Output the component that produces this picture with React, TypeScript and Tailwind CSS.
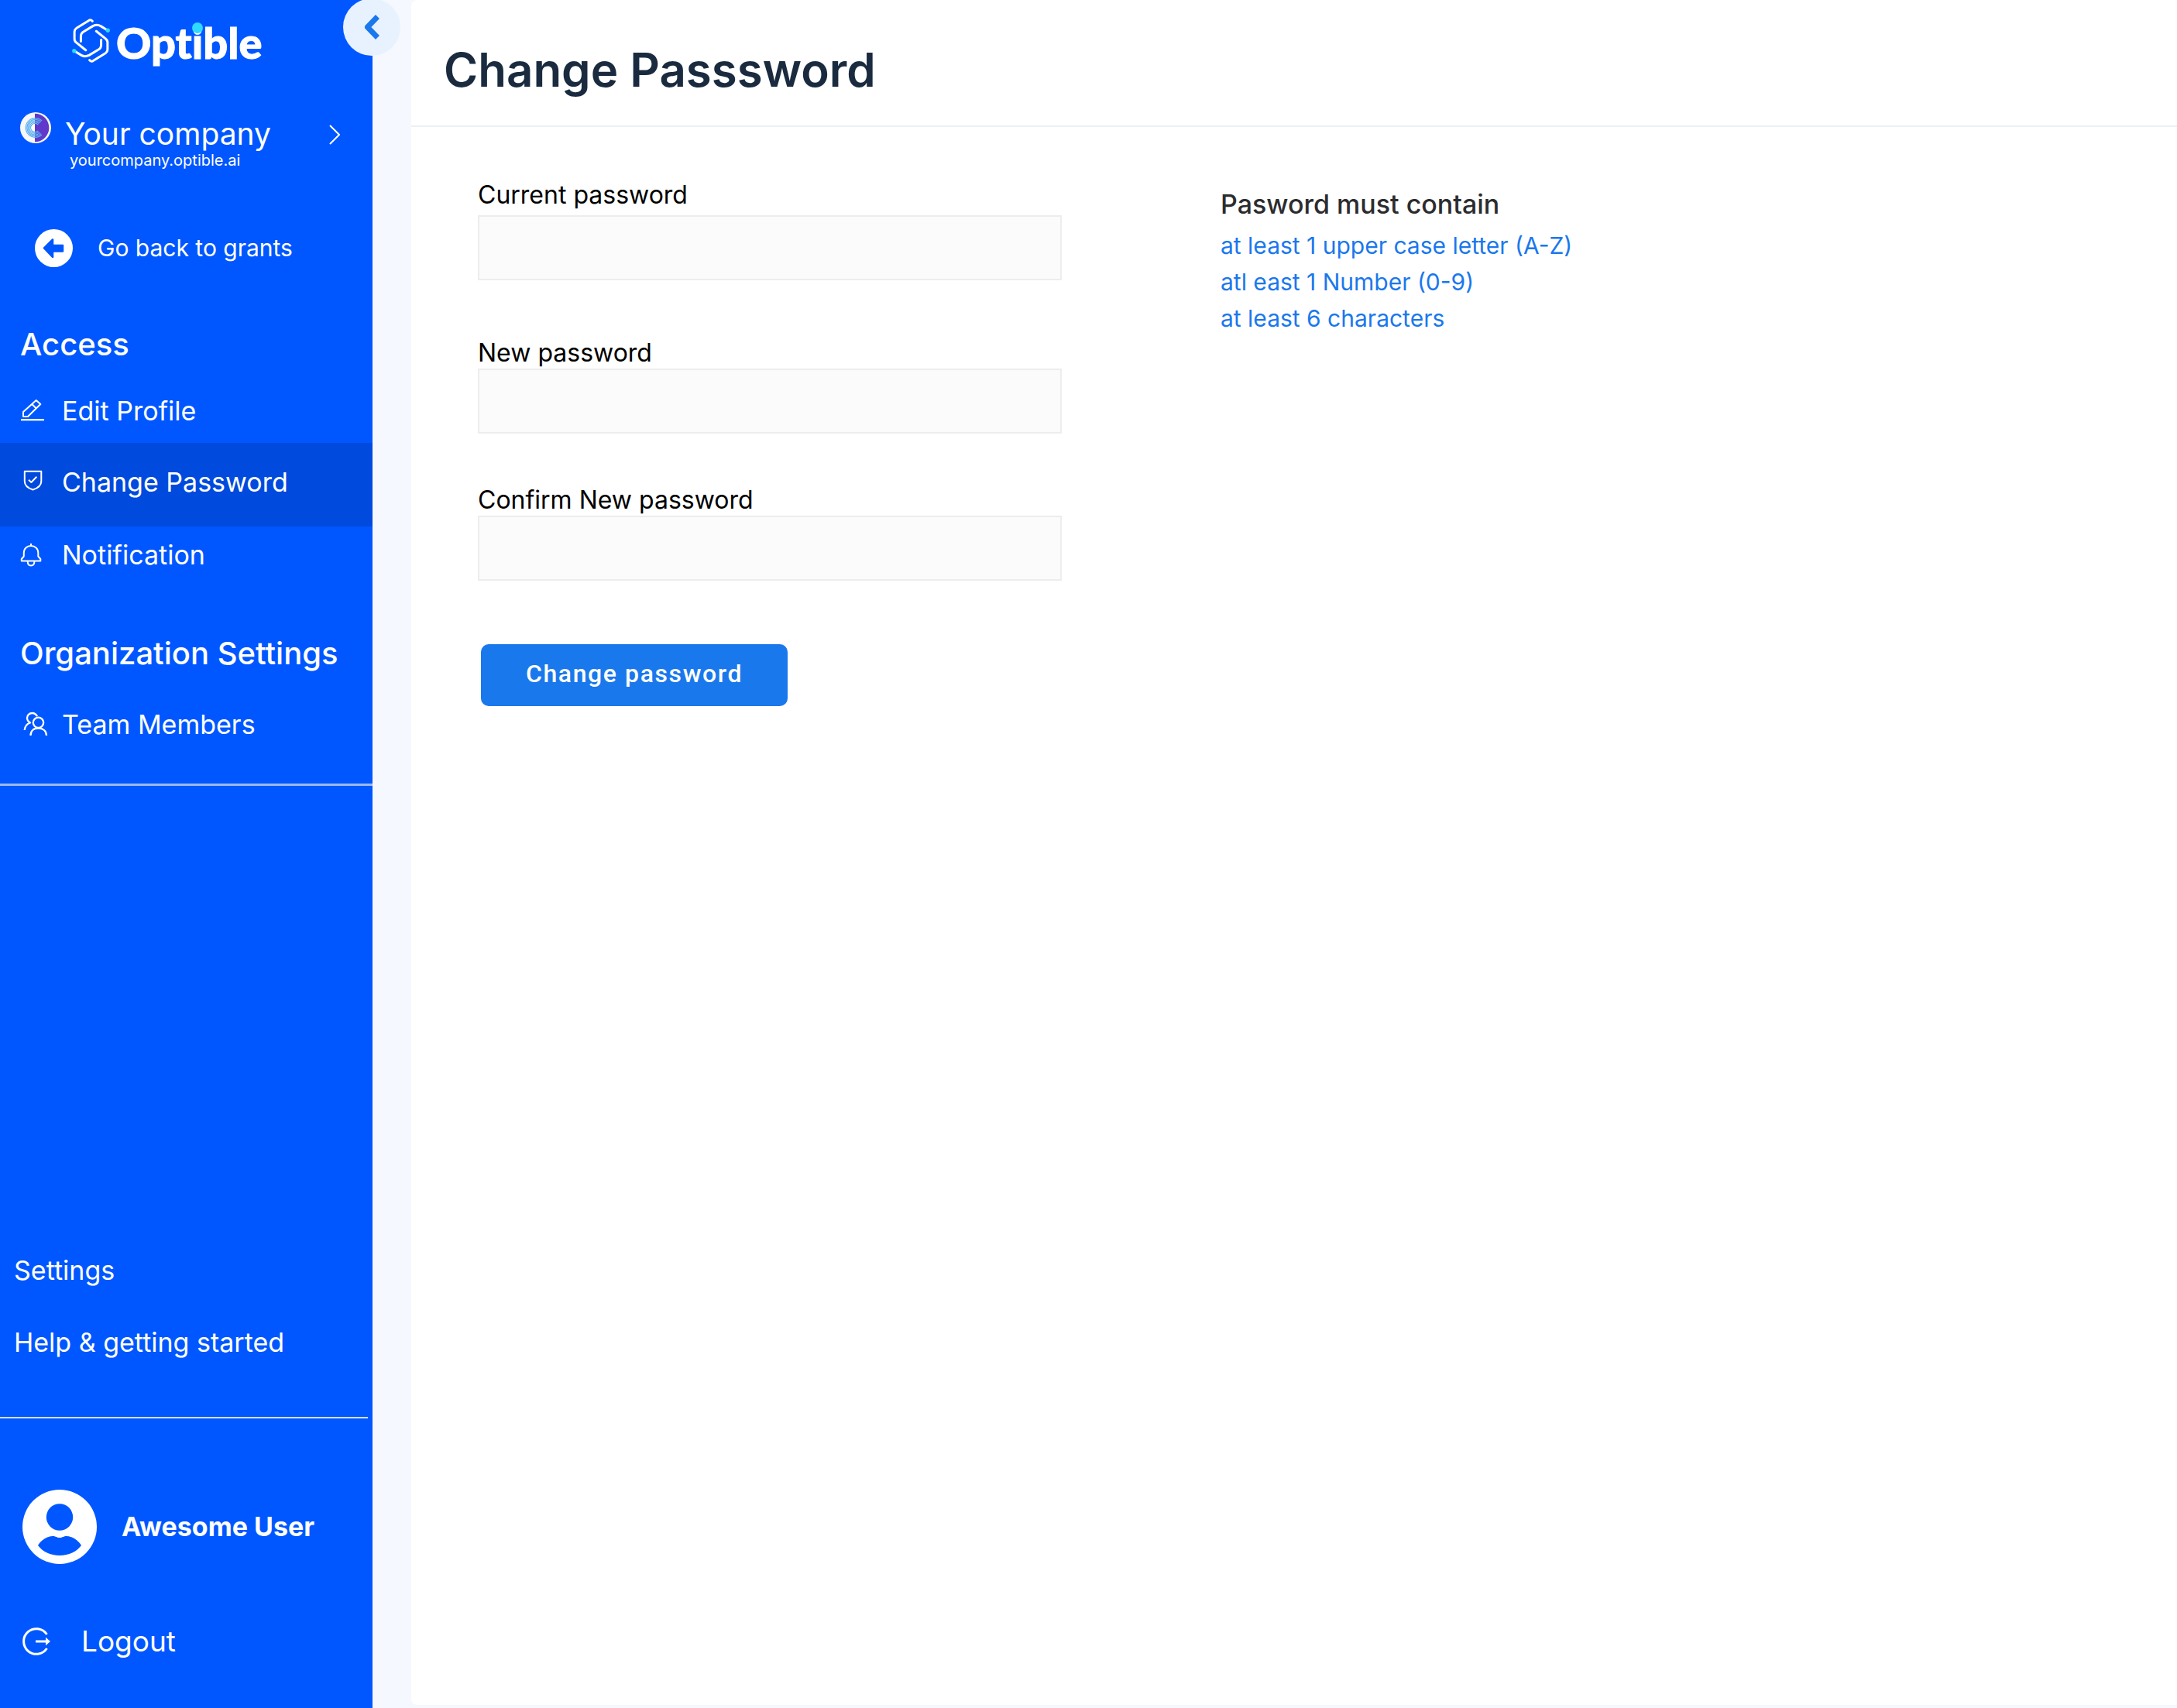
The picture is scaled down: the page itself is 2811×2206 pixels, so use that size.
import type { ReactNode } from "react";

function OptibleMark() {
  return (
    <svg viewBox="27 29 147 172" className="h-[57px] w-[49px]" fill="none" stroke="#fff" strokeWidth="9" strokeLinecap="round" strokeLinejoin="round" aria-hidden="true">
      <g>
        <path d="M106 39Q99 31 91 37L43 67Q36 72 36 80V108Q36 117 43 122L80 152" />
        <path d="M61 118V98Q61 87 70 81L108 58Q124 50 138 58L162 73" />
      </g>
      <g transform="rotate(180 100.5 115)">
        <path d="M106 39Q99 31 91 37L43 67Q36 72 36 80V108Q36 117 43 122L80 152" />
        <path d="M61 118V98Q61 87 70 81L108 58Q124 50 138 58L162 73" />
      </g>
      <circle cx="166" cy="75" r="8" fill="#2fd9ff" stroke="none" />
      <circle cx="35" cy="155" r="8" fill="#2fd9ff" stroke="none" />
    </svg>
  );
}

function CompanyAvatar() {
  return (
    <svg viewBox="0 0 120 120" className="size-10 shrink-0" fill="none" aria-hidden="true">
      <circle cx="60" cy="60" r="60" fill="#f7f7f8" />
      <path d="M57 5A55 55 0 0 1 57 115Z" fill="#6039cb" />
      <g stroke="#57aef0" strokeWidth="3.5">
        <path d="M70 48A17 17 0 1 0 70 72" />
        <path d="M73 44A22 22 0 1 0 73 76" />
        <path d="M77 41A27 27 0 1 0 77 79" />
        <path d="M81 37A32 32 0 1 0 81 83" />
        <path d="M84 33A37 37 0 1 0 84 87" />
      </g>
      <path d="M57 46A14 14 0 0 0 57 74Z" fill="#fff" />
    </svg>
  );
}

function BackIcon() {
  return (
    <svg viewBox="0 0 49 49" className="size-[49px] shrink-0" aria-hidden="true">
      <circle cx="24.5" cy="24.5" r="24.5" fill="#fff" />
      <path d="M12 24.5L23 13.500V21H36V28.500H23V36Z" fill="#0057ff" stroke="#0057ff" strokeWidth="2.500" strokeLinejoin="round" />
    </svg>
  );
}

function NavIcon({ children }: { children: ReactNode }) {
  return (
    <svg viewBox="0 0 36 36" className="size-9 shrink-0 overflow-visible" fill="none" stroke="#fff" strokeWidth="2" strokeLinejoin="round" aria-hidden="true">
      {children}
    </svg>
  );
}

const pencil = (
  <NavIcon>
    <path d="M22.700 4L28.300 9L12 25H6V19Z M17.300 9L22.600 14.300" />
    <path d="M3 29.200H33" strokeWidth="2.300" />
  </NavIcon>
);

const shield = (
  <NavIcon>
    <path d="M7.800 3.700H29.300V16.500C29.300 22 25 25.500 18.500 27.500C12 25.500 7.800 22 7.800 16.500Z" />
    <path d="M13 14.700L16.400 18L23.300 10.700" />
  </NavIcon>
);

const bell = (
  <NavIcon>
    <path d="M16 3V6" />
    <path d="M6.800 15C6.800 9.500 10.700 6 16 6S25.300 9.500 25.300 15V19.500L28.300 23V25.500H3.800V23L6.800 19.500Z" />
    <path d="M11.700 26C11.700 29.500 13.500 31.500 16 31.500S20.400 29.500 20.400 26" />
  </NavIcon>
);

const team = (
  <NavIcon>
    <g strokeWidth="2.300">
      <circle cx="25.500" cy="15.300" r="6.700" />
      <path d="M15.500 32C15.500 26 19.500 22.500 25.500 22.500S36 26 36 32" />
      <path d="M24 7.200C22.500 4.200 20 3 17.500 3C13.800 3 11 5.800 11 9.300C11 12 12.500 14 15 15.500C10.500 17 8 20.500 7.700 25" />
    </g>
  </NavIcon>
);

function UserIcon() {
  return (
    <svg viewBox="0 0 96 96" className="size-24 shrink-0" aria-hidden="true">
      <circle cx="48" cy="48" r="48" fill="#fff" />
      <g fill="#0057ff">
        <circle cx="48" cy="35.500" r="17.200" />
        <path d="M20 72C24 65 32 60 39 60C43 60 44 62 48 62S53 60 57 60C64 60 72 65 76 72C70 80 60 85 48 85S26 80 20 72Z" />
      </g>
    </svg>
  );
}

function LogoutIcon() {
  return (
    <svg viewBox="0 0 36 36" className="size-9 shrink-0" fill="none" stroke="#fff" strokeWidth="3" aria-hidden="true">
      <path d="M31.500 9A16.300 16.300 0 1 0 31.500 27" />
      <path d="M17 18H31" />
      <path d="M30 12.800L36 18L30 23.200Z" fill="#fff" stroke="none" />
    </svg>
  );
}

function NavLink({ icon, label, className }: { icon: ReactNode; label: string; className: string }) {
  return (
    <a href="#" className={`flex items-center gap-5 pl-6 text-[34px] leading-10 ${className}`}>
      {icon}
      {label}
    </a>
  );
}

function Sidebar() {
  return (
    <aside className="relative flex w-[481px] shrink-0 flex-col bg-[#0057ff] text-white">
      <button type="button" aria-label="Collapse sidebar" className="absolute -top-0.5 -right-9 flex size-[74px] items-center justify-center rounded-full bg-[#e8f2ff]">
        <svg viewBox="0 0 20 32" className="h-8 w-5" fill="none" stroke="#1a78ed" strokeWidth="7" strokeLinejoin="round" aria-hidden="true">
          <path d="M17.500 2.500L4.500 16L17.500 29.500" />
        </svg>
      </button>

      <div className="flex items-center gap-2 pt-6 pl-[93px]">
        <OptibleMark />
        <span className="pt-1 font-['Lato',sans-serif] text-[56px] leading-[53px] font-black [-webkit-text-stroke:1px_white] [font-variant-ligatures:none]">
          Opt
          <span className="relative">
            i
            <span className="absolute top-2 left-1/2 size-3.5 -translate-x-1/2 rounded-full bg-[#2fd9ff]" />
          </span>
          ble
        </span>
      </div>

      <a href="#" className="mt-16 flex items-start pr-[42px] pl-[26px]">
        <CompanyAvatar />
        <span className="flex grow flex-col pt-1.5 pl-[18px]">
          <span className="text-[39px] leading-11">Your company</span>
          <span className="pl-1.5 text-[20px] leading-6">yourcompany.optible.ai</span>
        </span>
        <svg viewBox="0 0 14 26" className="mt-4 h-[26px] w-3.5" fill="none" stroke="#fff" strokeWidth="2" aria-hidden="true">
          <path d="M1 1L13 13L1 25" />
        </svg>
      </a>

      <a href="#" className="mt-19 flex items-center gap-8 pl-[45px] text-[30px] leading-[50px]">
        <BackIcon />
        Go back to grants
      </a>

      <nav aria-label="Settings" className="border-b-[3px] border-[#9db9e4] pb-10">
        <h2 className="mt-19 pl-[26px] text-[40px] leading-12 font-medium">Access</h2>
        <NavLink icon={pencil} label="Edit Profile" className="mt-4 h-[87px] pt-1" />
        <NavLink icon={shield} label="Change Password" className="h-[108px] bg-[#004ade] pb-1.5" />
        <NavLink icon={bell} label="Notification" className="h-[74px]" />
        <h2 className="mt-[66px] pl-[26px] text-[40px] leading-12 font-medium">Organization Settings</h2>
        <NavLink icon={team} label="Team Members" className="mt-8 h-[72px]" />
      </nav>

      <div className="mt-auto pb-[62px]">
        <div className="mr-1.5 border-b-2 border-[#d9dde4] pb-[50px] text-[34px] leading-[93px]">
          <a href="#" className="block pl-[18px]">Settings</a>
          <a href="#" className="block pl-[18px]">Help &amp; getting started</a>
        </div>
        <a href="#" className="mt-23 flex items-center gap-8 pl-[29px] text-[34px] leading-10 font-bold">
          <UserIcon />
          Awesome User
        </a>
        <button type="button" className="mt-19 flex items-center gap-10 pl-[29px] text-[37px] leading-12">
          <LogoutIcon />
          Logout
        </button>
      </div>
    </aside>
  );
}

function PasswordField({ id, label, className }: { id: string; label: string; className: string }) {
  return (
    <div className={`flex flex-col ${className}`}>
      <label htmlFor={id} className="text-[32px] leading-10 text-black">{label}</label>
      <input id={id} type="password" className="h-[84px] w-full border-2 border-[#ededed] bg-[#fbfbfb] px-4 text-[32px] outline-none" />
    </div>
  );
}

export default function App() {
  return (
    <div className="flex min-h-screen bg-[#f5f8fe] font-['Inter',sans-serif]">
      <Sidebar />
      <main className="mb-1 ml-[50px] min-w-0 grow rounded-l-lg bg-white">
        <header className="border-b-2 border-[#ebf0f6] pt-[50px] pb-8 pl-[42px]">
          <h1 className="text-[60px] leading-20 font-semibold text-[#1a2b40]">Change Passsword</h1>
        </header>
        <div className="flex flex-wrap gap-x-[205px] gap-y-16 pt-17 pl-[86px]">
          <form className="w-[754px] max-w-full">
            <PasswordField id="current-password" label="Current password" className="gap-1.5" />
            <PasswordField id="new-password" label="New password" className="mt-[74px]" />
            <PasswordField id="confirm-password" label="Confirm New password" className="mt-[66px]" />
            <button type="button" className="mt-[82px] ml-1 h-20 w-[396px] rounded-[10px] bg-[#1a78ed] pb-1 font-['Roboto',sans-serif] text-[32px] font-medium tracking-wider text-white">
              Change password
            </button>
          </form>
          <section className="pt-3">
            <h2 className="text-[34px] leading-10 font-medium text-[#2c2c2e]">Pasword must contain</h2>
            <ul className="mt-2.5 text-[30px] leading-[47px] text-[#1a78ed]">
              <li>at least 1 upper case letter (A-Z)</li>
              <li>atl east 1 Number (0-9)</li>
              <li>at least 6 characters</li>
            </ul>
          </section>
        </div>
      </main>
    </div>
  );
}
